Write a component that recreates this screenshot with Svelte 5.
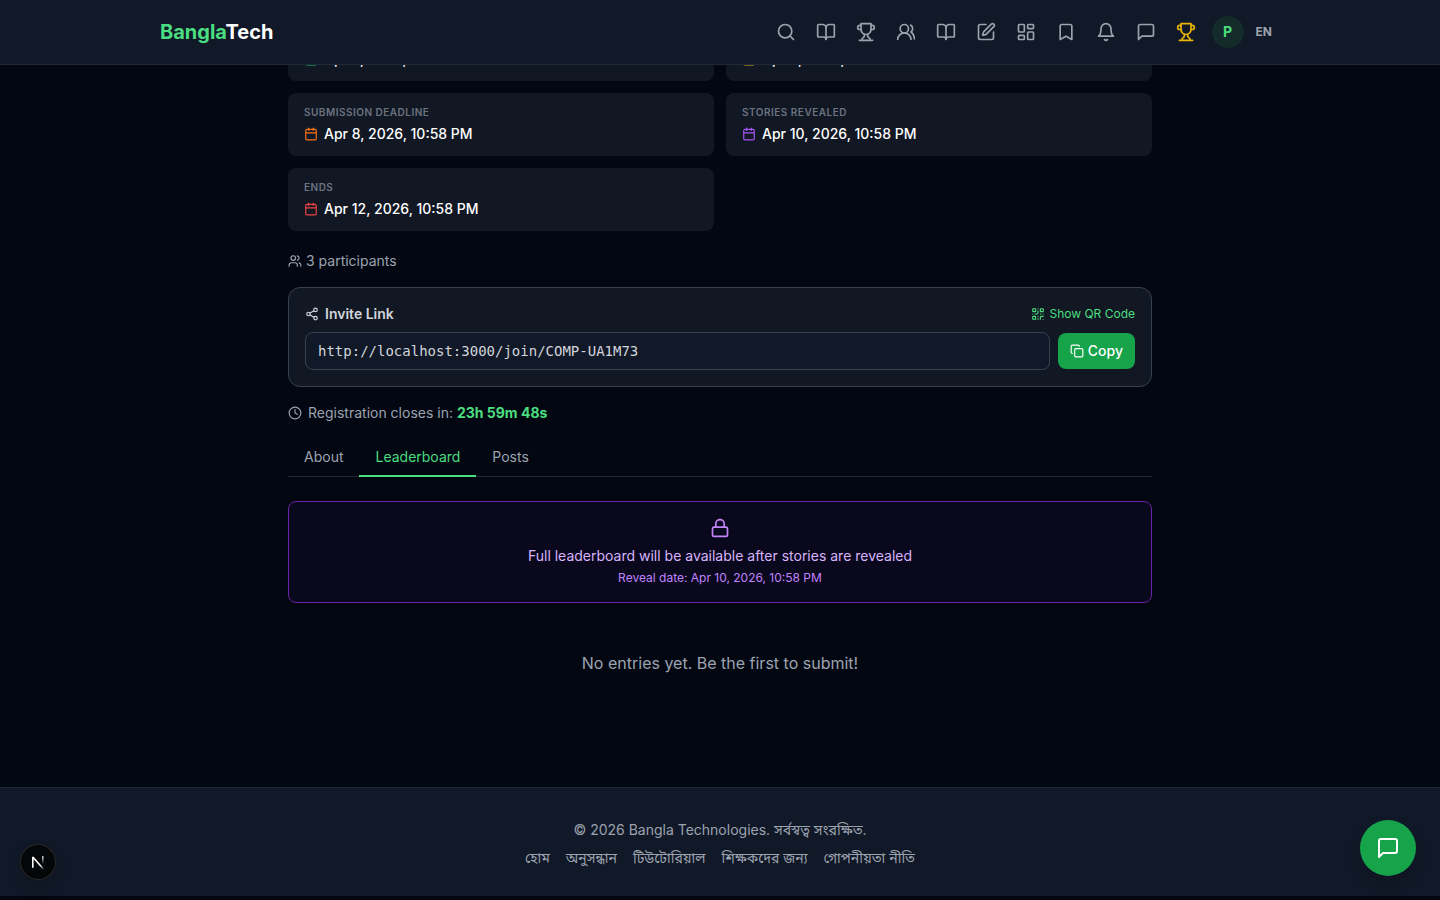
<script>
  const navItems = [
    { icon: 'search', label: 'Search' },
    { icon: 'book', label: 'Stories' },
    { icon: 'trophy', label: 'Competitions' },
    { icon: 'people', label: 'Community' },
    { icon: 'book', label: 'Tutorials' },
    { icon: 'pen', label: 'Write' },
    { icon: 'dashboard', label: 'Dashboard' },
    { icon: 'bookmark', label: 'Bookmarks' },
    { icon: 'bell', label: 'Notifications' },
    { icon: 'message', label: 'Messages' },
    { icon: 'trophy', label: 'Awards', gold: true }
  ];

  const dates = [
    { label: 'Starts', value: 'Apr 5, 2026, 10:58 PM', tone: 'green' },
    { label: 'Registration Deadline', value: 'Apr 6, 2026, 10:58 PM', tone: 'yellow' },
    { label: 'Submission Deadline', value: 'Apr 8, 2026, 10:58 PM', tone: 'orange' },
    { label: 'Stories Revealed', value: 'Apr 10, 2026, 10:58 PM', tone: 'purple' },
    { label: 'Ends', value: 'Apr 12, 2026, 10:58 PM', tone: 'red' }
  ];

  const tabs = ['About', 'Leaderboard', 'Posts'];
  let active = $state('Leaderboard');

  const footerLinks = ['হোম', 'অনুসন্ধান', 'টিউটোরিয়াল', 'শিক্ষকদের জন্য', 'গোপনীয়তা নীতি'];
  const inviteUrl = 'http://localhost:3000/join/COMP-UA1M73';
</script>

{#snippet icon(name, size)}
  <svg width={size} height={size} viewBox="0 0 24 24" fill="none" stroke="currentColor" stroke-width="2" stroke-linecap="round" stroke-linejoin="round" aria-hidden="true">
    {#if name === 'search'}
      <circle cx="11" cy="11" r="8" /><path d="m21 21-4.3-4.3" />
    {:else if name === 'book'}
      <path d="M12 7v14" /><path d="M3 18a1 1 0 0 1-1-1V4a1 1 0 0 1 1-1h5a4 4 0 0 1 4 4 4 4 0 0 1 4-4h5a1 1 0 0 1 1 1v13a1 1 0 0 1-1 1h-6a3 3 0 0 0-3 3 3 3 0 0 0-3-3z" />
    {:else if name === 'trophy'}
      <path d="M6 9H4.5a2.5 2.5 0 0 1 0-5H6" /><path d="M18 9h1.5a2.5 2.5 0 0 0 0-5H18" /><path d="M4 22h16" /><path d="M10 14.66V17c0 .55-.47.98-.97 1.21C7.85 18.75 7 20.24 7 22" /><path d="M14 14.66V17c0 .55.47.98.97 1.21C16.15 18.75 17 20.24 17 22" /><path d="M18 2H6v7a6 6 0 0 0 12 0V2Z" />
    {:else if name === 'people'}
      <path d="M18 21a8 8 0 0 0-16 0" /><circle cx="10" cy="8" r="5" /><path d="M22 20c0-3.37-2-6.5-4-8a5 5 0 0 0-.45-8.3" />
    {:else if name === 'pen'}
      <path d="M12 3H5a2 2 0 0 0-2 2v14a2 2 0 0 0 2 2h14a2 2 0 0 0 2-2v-7" /><path d="M18.375 2.625a1 1 0 0 1 3 3l-9.013 9.014a2 2 0 0 1-.853.505l-2.873.84a.5.5 0 0 1-.62-.62l.84-2.873a2 2 0 0 1 .506-.852z" />
    {:else if name === 'dashboard'}
      <rect width="7" height="9" x="3" y="3" rx="1" /><rect width="7" height="5" x="14" y="3" rx="1" /><rect width="7" height="9" x="14" y="12" rx="1" /><rect width="7" height="5" x="3" y="16" rx="1" />
    {:else if name === 'bookmark'}
      <path d="m19 21-7-4-7 4V5a2 2 0 0 1 2-2h10a2 2 0 0 1 2 2v16z" />
    {:else if name === 'bell'}
      <path d="M6 8a6 6 0 0 1 12 0c0 7 3 9 3 9H3s3-2 3-9" /><path d="M10.3 21a1.94 1.94 0 0 0 3.4 0" />
    {:else if name === 'message'}
      <path d="M21 15a2 2 0 0 1-2 2H7l-4 4V5a2 2 0 0 1 2-2h14a2 2 0 0 1 2 2z" />
    {:else if name === 'calendar'}
      <path d="M8 2v4" /><path d="M16 2v4" /><rect width="18" height="18" x="3" y="4" rx="2" /><path d="M3 10h18" />
    {:else if name === 'users'}
      <path d="M16 21v-2a4 4 0 0 0-4-4H6a4 4 0 0 0-4 4v2" /><circle cx="9" cy="7" r="4" /><path d="M22 21v-2a4 4 0 0 0-3-3.87" /><path d="M16 3.13a4 4 0 0 1 0 7.75" />
    {:else if name === 'share'}
      <circle cx="18" cy="5" r="3" /><circle cx="6" cy="12" r="3" /><circle cx="18" cy="19" r="3" /><path d="m8.59 13.51 6.83 3.98" /><path d="m15.41 6.51-6.82 3.98" />
    {:else if name === 'qr'}
      <rect width="5" height="5" x="3" y="3" rx="1" /><rect width="5" height="5" x="16" y="3" rx="1" /><rect width="5" height="5" x="3" y="16" rx="1" /><path d="M21 16h-3a2 2 0 0 0-2 2v3" /><path d="M21 21v.01" /><path d="M12 7v3a2 2 0 0 1-2 2H7" /><path d="M3 12h.01" /><path d="M12 3h.01" /><path d="M12 16v.01" /><path d="M16 12h1" /><path d="M21 12v.01" /><path d="M12 21v-1" />
    {:else if name === 'copy'}
      <rect width="14" height="14" x="8" y="8" rx="2" /><path d="M4 16c-1.1 0-2-.9-2-2V4c0-1.1.9-2 2-2h10c1.1 0 2 .9 2 2" />
    {:else if name === 'clock'}
      <circle cx="12" cy="12" r="10" /><path d="M12 6v6l4 2" />
    {:else if name === 'lock'}
      <rect width="18" height="11" x="3" y="11" rx="2" /><path d="M7 11V7a5 5 0 0 1 10 0v4" />
    {/if}
  </svg>
{/snippet}

<div class="page">
  <header class="topbar">
    <div class="topbar-inner">
      <a class="logo" href="#home"><span>Bangla</span>Tech</a>
      <nav>
        {#each navItems as item}
          <a class="nav-link" class:gold={item.gold} href="#nav" aria-label={item.label}>{@render icon(item.icon, 20)}</a>
        {/each}
        <button class="avatar" type="button">P</button>
        <button class="lang" type="button">EN</button>
      </nav>
    </div>
  </header>

  <main>
    <div class="dates">
      {#each dates as d}
        <section class="date-card">
          <div class="date-label">{d.label}</div>
          <div class="date-value {d.tone}">{@render icon('calendar', 14)}<span>{d.value}</span></div>
        </section>
      {/each}
    </div>

    <div class="participants">{@render icon('users', 14)}<span>3 participants</span></div>

    <section class="invite">
      <div class="invite-head">
        <label for="invite-url">{@render icon('share', 14)}<span>Invite Link</span></label>
        <button class="qr" type="button">{@render icon('qr', 14)}<span>Show QR Code</span></button>
      </div>
      <div class="invite-row">
        <input id="invite-url" type="text" readonly value={inviteUrl} />
        <button class="copy" type="button">{@render icon('copy', 14)}<span>Copy</span></button>
      </div>
    </section>

    <div class="countdown">{@render icon('clock', 14)}<span>Registration closes in: <strong>23h 59m 48s</strong></span></div>

    <div class="tabs" role="tablist">
      {#each tabs as tab}
        <button type="button" role="tab" aria-selected={active === tab} class:active={active === tab} onclick={() => (active = tab)}>{tab}</button>
      {/each}
    </div>

    <section class="locked">
      {@render icon('lock', 20)}
      <p class="locked-title">Full leaderboard will be available after stories are revealed</p>
      <p class="locked-date">Reveal date: Apr 10, 2026, 10:58 PM</p>
    </section>

    <p class="empty">No entries yet. Be the first to submit!</p>
  </main>

  <footer>
    <p>© 2026 Bangla Technologies. সর্বস্বত্ব সংরক্ষিত.</p>
    <nav class="footer-links">
      {#each footerLinks as link}
        <a href="#footer">{link}</a>
      {/each}
    </nav>
  </footer>
</div>

<button class="dev-badge" type="button" aria-label="Developer tools">
  <svg width="36" height="36" viewBox="0 0 36 36" fill="none" aria-hidden="true">
    <defs>
      <linearGradient id="diag" x1="18" y1="18" x2="24" y2="25" gradientUnits="userSpaceOnUse"><stop offset="0.4" stop-color="#fff" /><stop offset="1" stop-color="#fff" stop-opacity="0.1" /></linearGradient>
      <linearGradient id="stem" x1="23" y1="12" x2="23" y2="20" gradientUnits="userSpaceOnUse"><stop stop-color="#fff" /><stop offset="1" stop-color="#fff" stop-opacity="0" /></linearGradient>
    </defs>
    <path d="M12.8 23.8V13L23.4 25" stroke="url(#diag)" stroke-width="1.6" stroke-linejoin="bevel" />
    <path d="M22.8 12.2v8" stroke="url(#stem)" stroke-width="1.5" />
  </svg>
</button>

<button class="chat" type="button" aria-label="Open chat">{@render icon('message', 24)}</button>

<style>
  :global(body) {
    margin: 0;
    background: #030712;
  }
  .page {
    font-family: Inter, 'Noto Sans Bengali', 'Noto Sans', sans-serif;
    font-size: 14px;
    line-height: 20px;
    color: #9ca3af;
  }
  svg {
    display: block;
    flex: none;
  }
  a {
    color: inherit;
    text-decoration: none;
  }
  button {
    font: inherit;
    color: inherit;
    background: none;
    border: 0;
    padding: 0;
    cursor: pointer;
  }
  p {
    margin: 0;
  }

  .topbar {
    position: sticky;
    top: 0;
    z-index: 10;
    background: #111827;
    border-bottom: 1px solid #1f2937;
  }
  .topbar-inner {
    display: flex;
    align-items: center;
    justify-content: space-between;
    max-width: 1120px;
    height: 64px;
    margin: 0 auto;
    padding: 0 16px;
  }
  .logo {
    font-size: 20px;
    line-height: 28px;
    font-weight: 700;
    color: #fff;
  }
  .logo span {
    color: #4ade80;
  }
  .topbar nav {
    display: flex;
    align-items: center;
    gap: 4px;
  }
  .nav-link {
    padding: 8px;
  }
  .gold {
    color: #eab308;
  }
  .avatar {
    width: 32px;
    height: 32px;
    margin: 0 4px;
    border-radius: 50%;
    background: #132b2a;
    color: #4ade80;
    font-weight: 700;
  }
  .lang {
    padding: 4px 8px 4px 4px;
    font-size: 12px;
    line-height: 16px;
    font-weight: 700;
  }

  main {
    max-width: 864px;
    margin: -47px auto 0;
    padding: 0 16px 64px;
  }
  .dates {
    display: grid;
    grid-template-columns: 1fr 1fr;
    gap: 12px;
  }
  .date-card {
    padding: 12px 16px;
    border-radius: 8px;
    background: #111823;
  }
  .date-label {
    margin-bottom: 4px;
    font-size: 10px;
    line-height: 15px;
    font-weight: 600;
    letter-spacing: 0.5px;
    text-transform: uppercase;
    color: #6b7280;
  }
  .date-value {
    display: flex;
    align-items: center;
    gap: 6px;
    font-weight: 500;
  }
  .date-value span {
    color: #fff;
  }
  .green { color: #22c55e; }
  .yellow { color: #eab308; }
  .orange { color: #f97316; }
  .purple { color: #a855f7; }
  .red { color: #ef4444; }

  .participants {
    display: flex;
    align-items: center;
    gap: 4px;
    margin: 20px 0 16px;
  }

  .invite {
    padding: 16px;
    border: 1px solid #374151;
    border-radius: 12px;
    background: #111823;
  }
  .invite-head {
    display: flex;
    align-items: center;
    justify-content: space-between;
    margin-bottom: 8px;
  }
  .invite-head label {
    display: flex;
    align-items: center;
    gap: 6px;
    font-weight: 600;
    color: #d1d5db;
  }
  .qr {
    display: flex;
    align-items: center;
    gap: 4px;
    font-size: 12px;
    line-height: 16px;
    color: #4ade80;
  }
  .invite-row {
    display: flex;
    align-items: center;
    gap: 8px;
  }
  input {
    flex: 1;
    min-width: 0;
    box-sizing: border-box;
    height: 38px;
    padding: 8px 12px;
    border: 1px solid #374151;
    border-radius: 8px;
    background: #111827;
    color: #d1d5db;
    font-family: 'DejaVu Sans Mono', monospace;
    font-size: 14px;
    line-height: 20px;
  }
  .copy {
    display: flex;
    align-items: center;
    gap: 4px;
    padding: 8px 12px;
    border-radius: 8px;
    background: #16a34a;
    color: #fff;
    font-weight: 500;
  }

  .countdown {
    display: flex;
    align-items: center;
    gap: 6px;
    margin: 16px 0;
  }
  .countdown strong {
    font-weight: 700;
    color: #4ade80;
  }

  .tabs {
    display: flex;
    margin-bottom: 24px;
    border-bottom: 1px solid #1f2937;
  }
  .tabs button {
    margin-bottom: -1px;
    padding: 8px 16px;
    border-bottom: 2px solid transparent;
  }
  .tabs .active {
    border-color: #4ade80;
    color: #4ade80;
  }

  .locked {
    display: flex;
    flex-direction: column;
    align-items: center;
    padding: 16px;
    border: 1px solid #6b21a8;
    border-radius: 8px;
    background: #0a081c;
    color: #c084fc;
    text-align: center;
  }
  .locked-title {
    margin: 8px 0 4px;
    color: #d8b4fe;
  }
  .locked-date {
    font-size: 12px;
    line-height: 16px;
  }
  .empty {
    padding: 48px 0;
    font-size: 16px;
    line-height: 24px;
    text-align: center;
  }

  footer {
    padding: 32px 16px 28px;
    border-top: 1px solid #1f2937;
    background: #111827;
    text-align: center;
  }
  .footer-links {
    display: flex;
    flex-wrap: wrap;
    justify-content: center;
    gap: 16px;
    margin-top: 8px;
  }

  .dev-badge {
    position: fixed;
    left: 20px;
    bottom: 20px;
    box-sizing: border-box;
    width: 36px;
    height: 36px;
    border-radius: 50%;
    background: #050608;
    box-shadow: inset 0 0 0 1px #2a2a2a, 0 8px 16px rgba(0, 0, 0, 0.12);
  }
  .chat {
    position: fixed;
    right: 24px;
    bottom: 24px;
    display: flex;
    align-items: center;
    justify-content: center;
    width: 56px;
    height: 56px;
    border-radius: 50%;
    background: #16a34a;
    color: #fff;
    box-shadow: 0 8px 16px rgba(0, 0, 0, 0.15);
  }
</style>
